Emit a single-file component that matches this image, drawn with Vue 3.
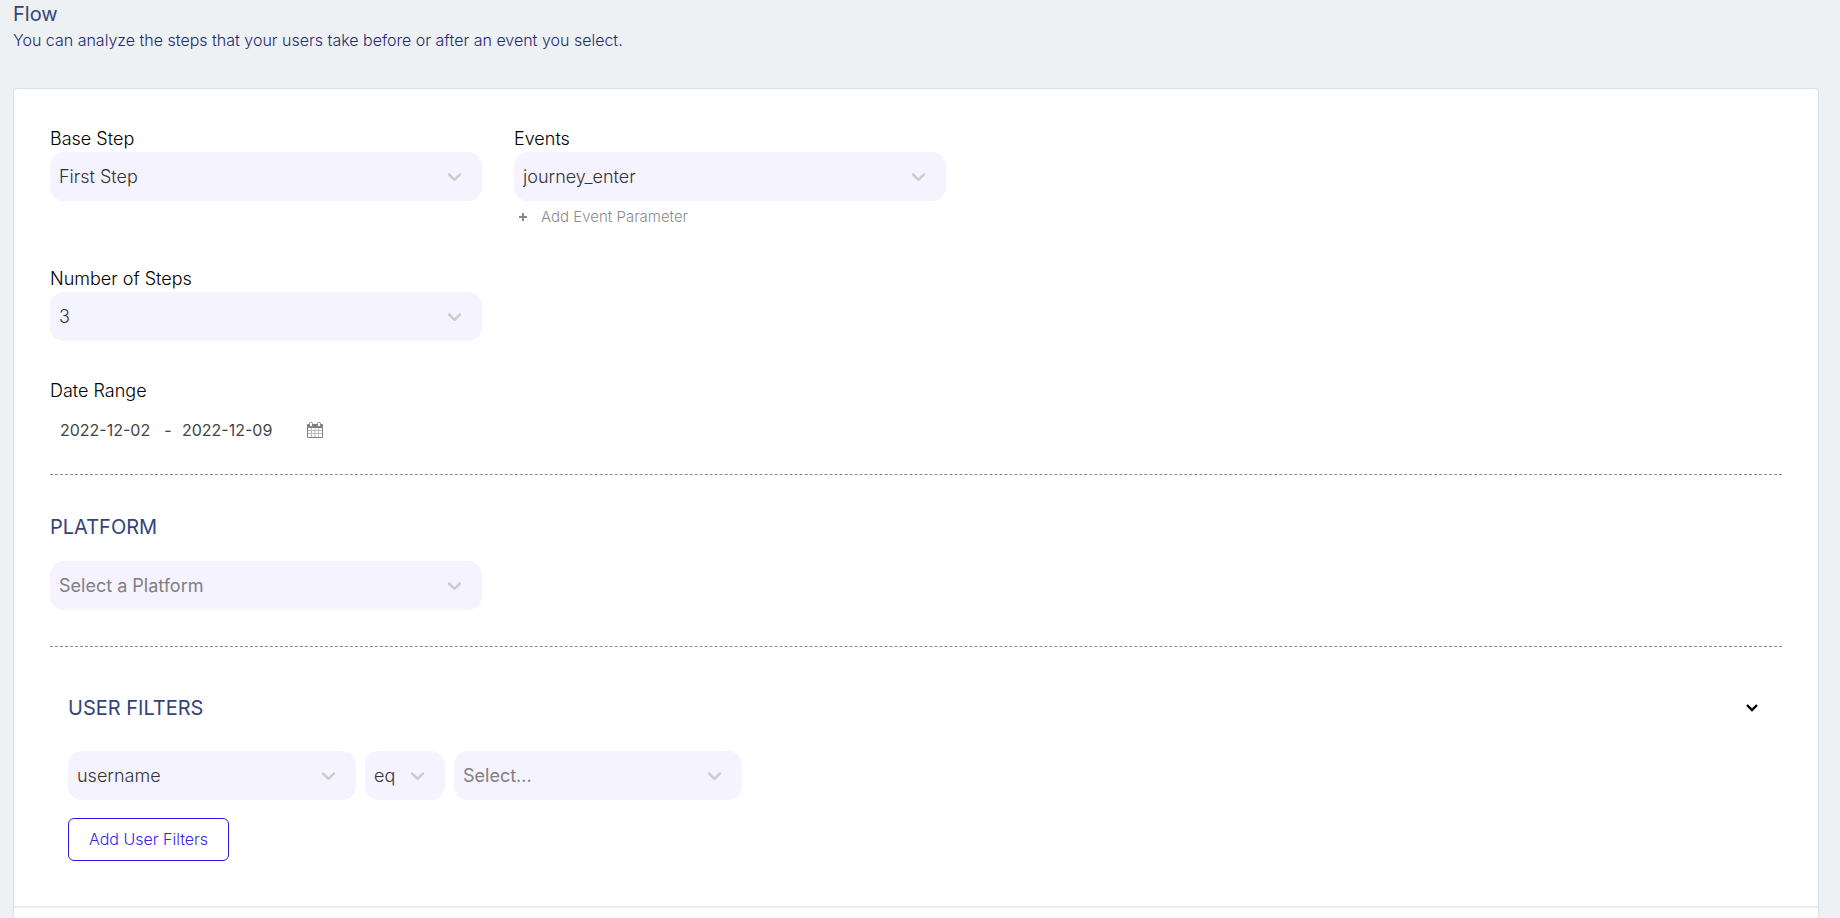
<script setup>
import { ref } from 'vue'

const CHEVRON =
  'M4.516 7.548c0.436-0.446 1.043-0.481 1.576 0l3.908 3.747 3.908-3.747c0.533-0.481 1.141-0.446 1.574 0 0.436 0.445 0.408 1.197 0 1.615-0.406 0.418-4.695 4.502-4.695 4.502-0.217 0.223-0.502 0.335-0.787 0.335s-0.57-0.112-0.789-0.335c0 0-4.287-4.084-4.695-4.502s-0.436-1.17 0-1.615z'

const baseStep = ref('First Step')
const event = ref('journey_enter')
const steps = ref('3')
const startDate = ref('2022-12-02')
const endDate = ref('2022-12-09')
const platform = ref('')
const property = ref('username')
const operator = ref('eq')
const filterValue = ref('')
</script>

<template>
  <main class="page">
    <header class="intro">
      <h1>Flow</h1>
      <p>You can analyze the steps that your users take before or after an event you select.</p>
    </header>

    <form class="card" @submit.prevent>
      <div class="body">
        <section class="steps">
          <div class="row">
            <div class="field">
              <label for="base-step">Base Step</label>
              <div class="select">
                <select id="base-step" v-model="baseStep">
                  <option>First Step</option>
                </select>
                <svg viewBox="0 0 20 20" aria-hidden="true"><path :d="CHEVRON" /></svg>
              </div>
            </div>
            <div class="field">
              <label for="event">Events</label>
              <div class="select">
                <select id="event" v-model="event">
                  <option>journey_enter</option>
                </select>
                <svg viewBox="0 0 20 20" aria-hidden="true"><path :d="CHEVRON" /></svg>
              </div>
              <button type="button" class="add-param">
                <svg viewBox="0 0 10 10" aria-hidden="true"><path d="M5 1v8M1 5h8" /></svg>
                Add Event Parameter
              </button>
            </div>
          </div>

          <div class="row">
            <div class="field">
              <label for="step-count">Number of Steps</label>
              <div class="select">
                <select id="step-count" v-model="steps">
                  <option>3</option>
                </select>
                <svg viewBox="0 0 20 20" aria-hidden="true"><path :d="CHEVRON" /></svg>
              </div>
            </div>
          </div>

          <div class="dates">
            <label for="start-date">Date Range</label>
            <div class="range">
              <input id="start-date" v-model="startDate" type="text" />
              <span>-</span>
              <input v-model="endDate" type="text" aria-label="End date" />
              <button type="button" class="calendar" aria-label="Open calendar">
                <svg viewBox="0 0 16 16" aria-hidden="true">
                  <path class="shape" d="M1 2H15Q16 2 16 3V15Q16 16 15 16H1Q0 16 0 15V3Q0 2 1 2z" />
                  <path class="paper" d="M1 6h14v9H1z" />
                  <path class="grid" d="M4.500 6v9M8 6v9M11.500 6v9M1 8.500h14M1 11.500h14" />
                  <rect class="ring" x="2.500" y="0.500" width="3" height="4" rx="1" />
                  <rect class="ring" x="10.500" y="0.500" width="3" height="4" rx="1" />
                </svg>
              </button>
            </div>
          </div>
        </section>

        <section class="platform">
          <h2 id="platform-title">PLATFORM</h2>
          <div class="row">
            <div class="field">
              <div class="select">
                <select v-model="platform" class="empty" aria-labelledby="platform-title">
                  <option value="">Select a Platform</option>
                </select>
                <svg viewBox="0 0 20 20" aria-hidden="true"><path :d="CHEVRON" /></svg>
              </div>
            </div>
          </div>
        </section>

        <section class="filters">
          <div class="filters-head">
            <h2>USER FILTERS</h2>
            <button type="button" class="toggle" aria-label="Toggle user filters">
              <svg viewBox="0 0 12 8" aria-hidden="true"><path d="M1 1L6 6L11 1" /></svg>
            </button>
          </div>
          <div class="filter-row">
            <div class="select wide">
              <select v-model="property" aria-label="Property">
                <option>username</option>
              </select>
              <svg viewBox="0 0 20 20" aria-hidden="true"><path :d="CHEVRON" /></svg>
            </div>
            <div class="select narrow">
              <select v-model="operator" aria-label="Operator">
                <option>eq</option>
              </select>
              <svg viewBox="0 0 20 20" aria-hidden="true"><path :d="CHEVRON" /></svg>
            </div>
            <div class="select wide">
              <select v-model="filterValue" class="empty" aria-label="Value">
                <option value="">Select...</option>
              </select>
              <svg viewBox="0 0 20 20" aria-hidden="true"><path :d="CHEVRON" /></svg>
            </div>
          </div>
          <button type="button" class="add-filter">Add User Filters</button>
        </section>
      </div>
      <footer class="card-foot"></footer>
    </form>
  </main>
</template>

<style>
body {
  margin: 0;
  background: #edf1f4;
}
</style>

<style scoped>
* {
  box-sizing: border-box;
}

.page {
  display: flex;
  flex-direction: column;
  min-height: 100vh;
  padding: 0 21px 0 13px;
  font-family: Inter, "Open Sans", sans-serif;
  font-size: 18px;
  font-weight: 300;
  line-height: 24px;
  color: #000;
}

button,
input,
select {
  margin: 0;
  padding: 0;
  border: 0;
  background: none;
  font: inherit;
  color: inherit;
}

h1,
h2,
p {
  margin: 0;
}

h1,
h2 {
  font-size: 20px;
  font-weight: 400;
  line-height: 28px;
  color: #35437c;
}

.intro {
  padding-bottom: 36px;
}

.intro p {
  font-size: 16px;
  color: #1f2a6b;
}

.card {
  display: flex;
  flex: 1;
  flex-direction: column;
  border: 1px solid #dcdfe8;
  border-bottom: 0;
  border-radius: 4px 4px 0 0;
  background: #fff;
}

.body {
  padding: 38px 36px 45px;
}

.steps,
.platform {
  border-bottom: 1px dashed #8b8b98;
}

.steps {
  padding-bottom: 28px;
}

.row {
  display: flex;
  gap: 32px;
}

.row + .row {
  margin-top: 38px;
}

.field {
  flex: 0 1 432px;
}

.field label,
.dates label {
  display: block;
  padding-bottom: 1px;
}

.select {
  position: relative;
  height: 49px;
}

.select select {
  width: 100%;
  height: 100%;
  padding: 0 40px 0 9px;
  border-radius: 14px;
  background: #f5f3ff;
  color: #333;
  appearance: none;
}

.select select.empty {
  font-weight: 400;
  color: #808080;
}

.select svg {
  position: absolute;
  top: 13px;
  right: 16px;
  width: 23px;
  height: 23px;
  fill: #ccc;
  pointer-events: none;
}

.add-param {
  display: flex;
  align-items: center;
  gap: 13px;
  padding: 4px 4px 0;
  font-size: 15px;
  color: #8c8c8c;
}

.add-param svg {
  width: 10px;
  height: 10px;
  fill: none;
  stroke: #888;
  stroke-width: 2;
}

.dates {
  padding-top: 38px;
}

.range {
  display: flex;
  align-items: center;
  padding: 14px 10px 4px;
  font-size: 16px;
  font-weight: 400;
  color: #444;
}

.range input {
  width: 94px;
  height: 24px;
}

.range span {
  width: 28px;
  text-align: center;
}

.calendar {
  width: 16px;
  height: 16px;
  margin-left: 31px;
}

.calendar svg {
  display: block;
  width: 16px;
  height: 16px;
}

.shape {
  fill: #7c8080;
}

.paper {
  fill: #fff;
}

.grid {
  fill: none;
  stroke: #b8bcbc;
  stroke-width: 1;
}

.ring {
  fill: #fff;
  stroke: #7c8080;
  stroke-width: 1;
}

.platform {
  padding: 38px 0 36px;
}

.platform h2 {
  padding-bottom: 20px;
}

.filters {
  padding: 47px 18px 0;
}

.filters-head {
  display: flex;
  align-items: center;
  justify-content: space-between;
  padding-bottom: 29px;
}

.toggle {
  display: flex;
  margin-right: 6px;
}

.toggle svg {
  width: 12px;
  height: 8px;
  fill: none;
  stroke: #000;
  stroke-width: 2.400;
}

.filter-row {
  display: flex;
  gap: 9px;
}

.wide {
  flex: 0 1 288px;
}

.narrow {
  flex: 0 0 80px;
}

.narrow select {
  padding-right: 36px;
}

.add-filter {
  height: 43px;
  margin-top: 18px;
  padding: 0 20px 2px;
  border: 1px solid #3117e0;
  border-radius: 6px;
  font-size: 16px;
  color: #3b24e8;
}

.card-foot {
  flex: 1;
  border-top: 2px solid #ececec;
}
</style>
